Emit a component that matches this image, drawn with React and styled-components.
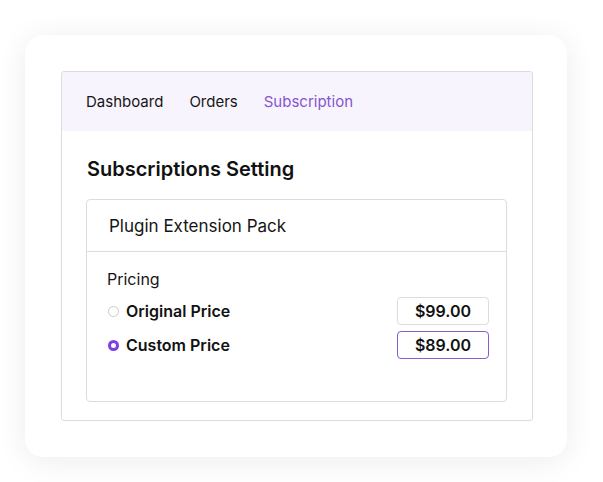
import React, { useState } from "react";
import styled, { createGlobalStyle } from "styled-components";

const GlobalStyle = createGlobalStyle`
  * { box-sizing: border-box; }
  body {
    margin: 0;
    background: #ffffff;
    font-family: Inter, "Noto Sans", "Liberation Sans", sans-serif;
    color: #111111;
  }
`;

const tabs = ["Dashboard", "Orders", "Subscription"];

const prices = [
  { id: "original", label: "Original Price", value: "$99.00" },
  { id: "custom", label: "Custom Price", value: "$89.00" },
];

const App = () => {
  const [selected, setSelected] = useState("custom");

  return (
    <Page>
      <GlobalStyle />
      <Card>
        <Panel>
          <Nav>
            {tabs.map((t) => (
              <NavItem key={t} $active={t === "Subscription"}>
                {t}
              </NavItem>
            ))}
          </Nav>
          <Body>
            <Title>Subscriptions Setting</Title>
            <Product>
              <ProductHeader>Plugin Extension Pack</ProductHeader>
              <ProductBody>
                <SectionLabel>Pricing</SectionLabel>
                <Rows>
                  {prices.map((p) => (
                    <Row key={p.id} onClick={() => setSelected(p.id)}>
                      <Option>
                        <Radio $checked={selected === p.id} />
                        <OptionLabel>{p.label}</OptionLabel>
                      </Option>
                      <PriceBox $active={selected === p.id}>{p.value}</PriceBox>
                    </Row>
                  ))}
                </Rows>
              </ProductBody>
            </Product>
          </Body>
        </Panel>
      </Card>
    </Page>
  );
};

const Page = styled.div`
  width: 603px;
  height: 482px;
  padding: 35px 36px 25px 25px;
`;

const Card = styled.div`
  width: 542px;
  height: 422px;
  background: #ffffff;
  border-radius: 18px;
  box-shadow: 0px 4px 30px rgba(30, 30, 40, 0.08);
  padding: 36px 34px 37px 36px;
`;

const Panel = styled.div`
  width: 472px;
  height: 350px;
  border: 1px solid #dcdcdf;
  border-radius: 3px;
  overflow: hidden;
  display: flex;
  flex-direction: column;
`;

const Nav = styled.div`
  height: 59px;
  background: #f7f4fe;
  display: flex;
  align-items: center;
  gap: 26px;
  padding: 1px 24px 0;
`;

const NavItem = styled.div`
  font-size: 15px;
  line-height: 20px;
  color: ${(p) => (p.$active ? "#8754cf" : "#161616")};
`;

const Body = styled.div`
  padding: 26px 25px 0 24px;
`;

const Title = styled.div`
  font-size: 20px;
  font-weight: 600;
  line-height: 24px;
  padding-left: 1px;
  color: #111111;
`;

const Product = styled.div`
  margin-top: 18px;
  width: 421px;
  height: 203px;
  border: 1px solid #dcdcdf;
  border-radius: 4px;
  display: flex;
  flex-direction: column;
`;

const ProductHeader = styled.div`
  height: 52px;
  border-bottom: 1px solid #dcdcdf;
  display: flex;
  align-items: center;
  padding-left: 22px;
  font-size: 17px;
  color: #151515;
`;

const ProductBody = styled.div`
  padding: 15px 17px 0 20px;
`;

const SectionLabel = styled.div`
  font-size: 16px;
  line-height: 24px;
  color: #161616;
`;

const Rows = styled.div`
  margin-top: 6px;
  display: flex;
  flex-direction: column;
  gap: 6px;
`;

const Row = styled.div`
  display: flex;
  align-items: center;
  justify-content: space-between;
  cursor: pointer;
`;

const Option = styled.div`
  display: flex;
  align-items: center;
  gap: 7px;
  padding-left: 1px;
`;

const Radio = styled.span`
  width: 11px;
  height: 11px;
  border-radius: 50%;
  background: #ffffff;
  border: ${(p) => (p.$checked ? "3px solid #7c3fe4" : "1px solid #c9c9cc")};
`;

const OptionLabel = styled.span`
  font-size: 16px;
  font-weight: 600;
  line-height: 20px;
  color: #121212;
`;

const PriceBox = styled.div`
  width: 92px;
  height: 28px;
  border: 1px solid ${(p) => (p.$active ? "#8a5cc4" : "#dcdcdf")};
  border-radius: 4px;
  display: flex;
  align-items: center;
  justify-content: center;
  font-size: 16px;
  font-weight: 600;
  color: #121212;
`;

export default App;
